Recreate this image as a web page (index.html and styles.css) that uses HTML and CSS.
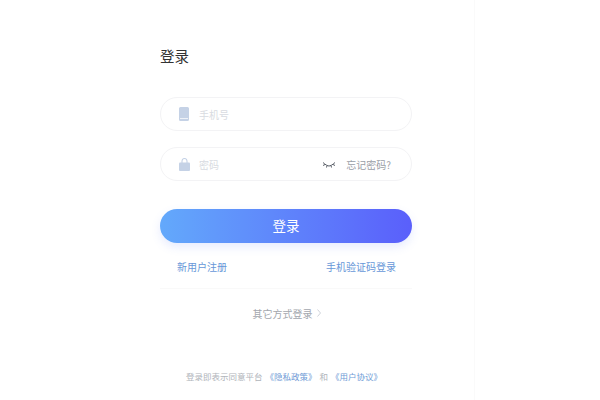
FILE: index.html
```html
<!DOCTYPE html>
<html lang="zh-CN">
<head>
<meta charset="utf-8">
<title>登录</title>
<link rel="stylesheet" href="styles.css">
</head>
<body>
<main class="panel">
  <form class="form">
    <h1 class="title">登录</h1>
    <div class="field field-first">
      <svg class="icon" width="10" height="14" viewBox="0 0 10 14"><path d="M1.5 0h7A1.5 1.5 0 0 1 10 1.500v11A1.500 1.500 0 0 1 8.500 14h-7A1.500 1.500 0 0 1 0 12.500v-11A1.500 1.500 0 0 1 1.500 0z" fill="#c5d2e6"/><rect x="1" y="11" width="8" height="1" fill="#eef2f8"/></svg>
      <span class="placeholder">手机号</span>
    </div>
    <div class="field field-second">
      <svg class="icon" width="11" height="13" viewBox="0 0 11 13"><path d="M3 5V3a2.500 2.500 0 0 1 5 0v2" fill="none" stroke="#c5d2e6" stroke-width="1.100"/><rect y="4.500" width="11" height="8.500" rx="1" fill="#c5d2e6"/></svg>
      <span class="placeholder">密码</span>
      <svg class="eye" width="14" height="8" viewBox="0 0 14 8"><path d="M1 2.500C3.500 5 6 6 7 6s3.500-1 6-3.500M2.500 4 1.500 6M5 5.500 4.500 7.500M9 5.500l.5 2M11.500 4l1 2" fill="none" stroke="#5a5f68" stroke-width="1"/></svg>
      <span class="forgot">忘记密码?</span>
    </div>
    <button class="submit" type="button">登录</button>
    <div class="links">
      <a class="link">新用户注册</a>
      <a class="link">手机验证码登录</a>
    </div>
    <div class="other">
      <span>其它方式登录</span>
      <svg class="chevron" width="4" height="8" viewBox="0 0 4 8"><path d="M.5.500 3.500 4 .5 7.500" fill="none" stroke="#c9ced6" stroke-width=".9"/></svg>
    </div>
    <p class="legal">登录即表示同意平台<a class="legal-link legal-first">《隐私政策》</a><span class="legal-and">和</span><a class="legal-link">《用户协议》</a></p>
  </form>
</main>
</body>
</html>
```
FILE: styles.css
```css
* { box-sizing: border-box; }
html, body { height: 100%; }
body {
  margin: 0;
  background: #fff;
  font-family: "Noto Sans CJK SC", "Liberation Sans", sans-serif;
  overflow: hidden;
}
.panel {
  width: 475px;
  height: 400px;
  padding: 45px 0 0 160px;
  border-right: 1px solid #fafafa;
}
.form { width: 252px; }
.title {
  margin: 0;
  height: 22px;
  font-size: 14.500px;
  line-height: 22px;
  font-weight: 400;
  color: #333;
}
.field {
  height: 34px;
  display: flex;
  align-items: center;
  padding: 0 20px 0 18px;
  border: 1px solid #f3f3f5;
  border-radius: 17px;
  font-size: 10px;
}
.field-first { margin-top: 30px; }
.field-second { margin-top: 16px; }
.icon { flex: none; }
.field-first .placeholder { margin-left: 10px; }
.field-second .placeholder { margin-left: 9px; }
.placeholder { color: #d8dbe1; }
.eye { margin-left: auto; }
.forgot { margin-left: 10px; color: #9a9ea7; }
.submit {
  display: block;
  width: 252px;
  height: 34px;
  margin-top: 28px;
  padding: 0 0 2px;
  border: 0;
  border-radius: 17px;
  background: linear-gradient(90deg, #63a9fb, #5a5ffb);
  box-shadow: 0 4px 10px rgba(98, 130, 250, .16);
  color: #fff;
  font: inherit;
  font-size: 13.500px;
}
.links {
  display: flex;
  justify-content: space-between;
  height: 46px;
  padding: 16px 16px 0 17px;
  border-bottom: 1px solid #f9f9f9;
  font-size: 10px;
  line-height: 16px;
}
.link { color: #6797d8; }
.other {
  display: flex;
  justify-content: center;
  align-items: center;
  gap: 4px;
  margin-top: 16px;
  padding-left: 1px;
  height: 16px;
  font-size: 10px;
  color: #a3a7ae;
}
.legal {
  margin: 48px 0 0 26px;
  white-space: nowrap;
  font-size: 8.500px;
  line-height: 14px;
  color: #b0b4ba;
}
.legal-link { color: #6f9bd6; }
.legal-first { margin-left: 3px; }
.legal-and { margin: 0 3px 0 3px; }
```
